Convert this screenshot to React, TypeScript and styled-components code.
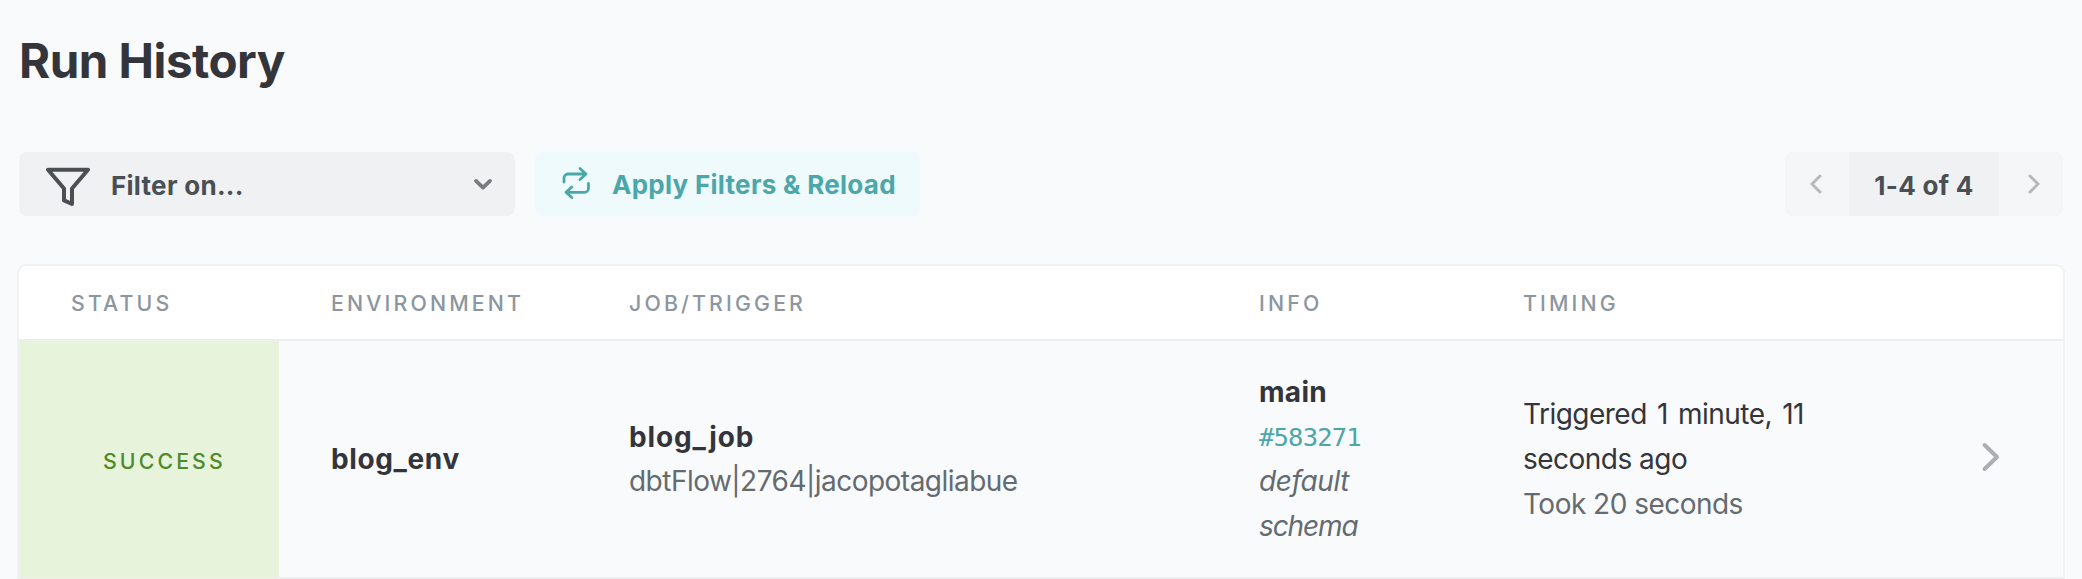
import React from "react";
import styled, { createGlobalStyle } from "styled-components";

const colors = {
  page: "#f9fafc",
  ink: "#33353b",
  label: "#4a4f54",
  muted: "#646b70",
  heading: "#8c969f",
  teal: "#4ba7a9",
  border: "#f0f1f3",
  divider: "#edeeef",
};

const GlobalStyle = createGlobalStyle`
  * { box-sizing: border-box; }
  body {
    margin: 0;
    background: ${colors.page};
    color: ${colors.ink};
    font-family: Inter, "Liberation Sans", sans-serif;
    overflow: hidden;
  }
  button { font-family: inherit; border: 0; margin: 0; padding: 0; }
  svg { flex: none; }
`;

const Page = styled.main`
  display: flex;
  flex-direction: column;
  height: 579px;
  padding: 31px 17px 0;
`;

const Title = styled.h1`
  flex: none;
  margin: 0 0 61px;
  padding-left: 2px;
  font-size: 47.5px;
  font-weight: 700;
  line-height: 60px;
  letter-spacing: -0.5px;
`;

const Toolbar = styled.div`
  display: flex;
  flex: none;
  height: 64px;
  padding: 0 2px;
  margin-bottom: 48px;
`;

const FilterSelect = styled.button`
  display: flex;
  align-items: center;
  width: 496px;
  padding: 0 22px 0 26px;
  margin-right: 20px;
  border-radius: 8px;
  background: #f0f1f3;
  color: ${colors.label};
`;

const ButtonText = styled.span<{ $gap?: number; $top?: number }>`
  margin-left: ${(p) => p.$gap ?? 0}px;
  padding-top: ${(p) => p.$top ?? 3}px;
  font-size: 26px;
  font-weight: 700;
  line-height: 32px;
  letter-spacing: 0.28px;
  white-space: nowrap;
`;

const Spacer = styled.span`
  flex: 1;
`;

const ApplyButton = styled.button`
  display: flex;
  align-items: center;
  width: 385px;
  padding-left: 26px;
  border-radius: 8px;
  background: #eefafb;
  color: ${colors.teal};
`;

const Pager = styled.div`
  display: flex;
  width: 278px;
  margin-left: auto;
  border-radius: 8px;
  overflow: hidden;
`;

const PagerButton = styled.button<{ $side: "left" | "right" }>`
  display: flex;
  align-items: center;
  justify-content: center;
  width: 64px;
  padding: ${(p) => (p.$side === "left" ? "0 2px 0 0" : "0 0 0 5px")};
  background: #f5f6f8;
  color: #b7b9bb;
`;

const PagerRange = styled.div`
  display: flex;
  align-items: center;
  justify-content: center;
  width: 150px;
  background: #f0f1f3;
  color: ${colors.label};
`;

const Table = styled.section`
  flex: none;
  width: 2048px;
  height: 330px;
  border: 2px solid ${colors.border};
  border-bottom: 0;
  border-radius: 9px 9px 0 0;
  overflow: hidden;
`;

const Row = styled.div`
  display: grid;
  grid-template-columns: 260px 298px 630px 264px 390px 1fr;
  height: 238px;
  border-bottom: 2px solid ${colors.divider};
`;

const HeaderRow = styled(Row)`
  height: 75px;
  background: #fff;
`;

const HeaderCell = styled.div`
  display: flex;
  align-items: center;
  padding: 1px 0 0 52px;
  color: ${colors.heading};
  font-size: 21.3px;
  font-weight: 500;
  letter-spacing: 3.15px;
`;

const Cell = styled.div`
  display: flex;
  flex-direction: column;
  justify-content: center;
  padding: 0.6px 0 0 52px;
  font-size: 28px;
  line-height: 44.8px;
  white-space: nowrap;
`;

const StatusCell = styled.div`
  display: flex;
  align-items: center;
  padding: 3px 0 0 84px;
  background: #e7f4db;
  color: #4f8a2b;
  font-size: 21.3px;
  font-weight: 500;
  letter-spacing: 3.1px;
`;

const Strong = styled.span<{ $spacing: number }>`
  font-weight: 700;
  letter-spacing: ${(p) => p.$spacing}px;
`;

const Plain = styled.span<{ $muted?: boolean; $wordGap?: number }>`
  color: ${(p) => (p.$muted ? colors.muted : colors.ink)};
  letter-spacing: -0.52px;
  word-spacing: ${(p) => p.$wordGap ?? 0}px;
`;

const Schema = styled.span<{ $spacing: number }>`
  color: ${colors.muted};
  font-style: italic;
  letter-spacing: ${(p) => p.$spacing}px;
`;

const Commit = styled.a`
  color: ${colors.teal};
  font-family: "DejaVu Sans Mono", monospace;
  font-size: 25.5px;
  letter-spacing: -0.8px;
`;

const ChevronCell = styled.div`
  display: flex;
  align-items: center;
  padding: 0 0 4px 120px;
  color: #acaeb1;
`;

const stroke = {
  fill: "none",
  stroke: "currentColor",
  strokeLinecap: "round",
  strokeLinejoin: "round",
} as const;

const FunnelIcon = () => (
  <svg width="46" height="44" viewBox="0 0 46 44" {...stroke} strokeWidth="4">
    <path d="M3 7.7H43L27 26.5V42L19 38.4V26.5Z" />
  </svg>
);

const RepeatIcon = () => (
  <svg width="30" height="36" viewBox="0 0 30 36" {...stroke} strokeWidth="2.8">
    <path d="M3 16V12A4 4 0 0 1 7 8H25M19 2.5L25 8L19 13.5" />
    <path d="M27.5 17.5V22.3A4 4 0 0 1 23.5 26.3H5M10.8 21L5 26.3L10.8 31.5" />
  </svg>
);

const DownIcon = () => (
  <svg width="20" height="14" viewBox="0 0 20 14" {...stroke} strokeWidth="3.8">
    <path d="M3 3.9L10 10.6L17 3.9" stroke="#797c7f" />
  </svg>
);

const ChevronIcon = ({ left }: { left?: boolean }) => (
  <svg width="14" height="22" viewBox="0 0 14 22" {...stroke} strokeWidth="3">
    <path d={left ? "M11 3L3 11L11 19" : "M3 3L11 11L3 19"} />
  </svg>
);

const RowChevron = () => (
  <svg width="20" height="32" viewBox="0 0 20 32" {...stroke} strokeWidth="4">
    <path d="M3.6 4L16 16L3.6 28" />
  </svg>
);

const headings = ["STATUS", "ENVIRONMENT", "JOB/TRIGGER", "INFO", "TIMING"];

export default function App() {
  return (
    <Page>
      <GlobalStyle />
      <Title>Run History</Title>
      <Toolbar>
        <FilterSelect>
          <FunnelIcon />
          <ButtonText $gap={20}>Filter on...</ButtonText>
          <Spacer />
          <DownIcon />
        </FilterSelect>
        <ApplyButton>
          <RepeatIcon />
          <ButtonText $gap={21} $top={1}>
            Apply Filters &amp; Reload
          </ButtonText>
        </ApplyButton>
        <Pager>
          <PagerButton $side="left" aria-label="Previous page">
            <ChevronIcon left />
          </PagerButton>
          <PagerRange>
            <ButtonText>1-4 of 4</ButtonText>
          </PagerRange>
          <PagerButton $side="right" aria-label="Next page">
            <ChevronIcon />
          </PagerButton>
        </Pager>
      </Toolbar>
      <Table>
        <HeaderRow>
          {headings.map((heading) => (
            <HeaderCell key={heading}>{heading}</HeaderCell>
          ))}
        </HeaderRow>
        <Row>
          <StatusCell>SUCCESS</StatusCell>
          <Cell>
            <Strong $spacing={0.62}>blog_env</Strong>
          </Cell>
          <Cell>
            <Strong $spacing={0.85}>blog_job</Strong>
            <Plain $muted>dbtFlow|2764|jacopotagliabue</Plain>
          </Cell>
          <Cell>
            <Strong $spacing={0.3}>main</Strong>
            <Commit>#583271</Commit>
            <Schema $spacing={-0.45}>default</Schema>
            <Schema $spacing={-1.1}>schema</Schema>
          </Cell>
          <Cell>
            <Plain $wordGap={2.8}>Triggered 1 minute, 11</Plain>
            <Plain>seconds ago</Plain>
            <Plain $muted>Took 20 seconds</Plain>
          </Cell>
          <ChevronCell>
            <RowChevron />
          </ChevronCell>
        </Row>
      </Table>
    </Page>
  );
}
